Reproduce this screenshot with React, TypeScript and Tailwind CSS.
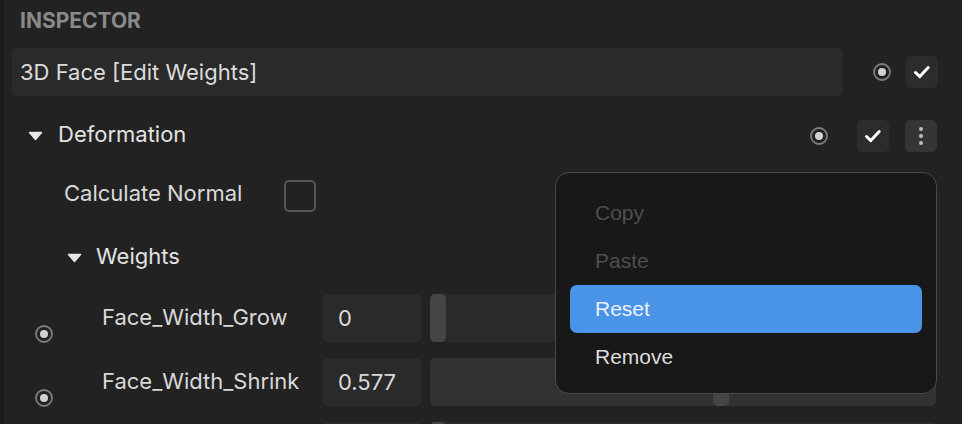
import React from 'react';

const font = { fontFamily: 'Inter, "Noto Sans", sans-serif' };

function Radio() {
  return (
    <svg width="18" height="18" viewBox="0 0 18 18" className="shrink-0 block">
      <circle cx="9" cy="9" r="8" fill="none" stroke="#7d7d7d" strokeWidth="1.8" />
      <circle cx="9" cy="9" r="4" fill="#d2d2d2" />
    </svg>
  );
}

function CheckButton() {
  return (
    <div className="w-[32px] h-[32px] rounded-[5px] bg-[#2c2c2c] flex items-center justify-center shrink-0">
      <svg width="18" height="18" viewBox="0 0 18 18">
        <path d="M2.5 9.5 L6.8 13.6 L15.2 4.6" fill="none" stroke="#ffffff" strokeWidth="3" strokeLinecap="round" strokeLinejoin="round" />
      </svg>
    </div>
  );
}

function MoreButton() {
  return (
    <div className="w-[32px] h-[32px] rounded-[5px] bg-[#353535] flex flex-col items-center justify-center gap-[3px] shrink-0">
      <span className="w-[4px] h-[4px] rounded-full bg-[#bdbdbd]" />
      <span className="w-[4px] h-[4px] rounded-full bg-[#bdbdbd]" />
      <span className="w-[4px] h-[4px] rounded-full bg-[#bdbdbd]" />
    </div>
  );
}

function Caret() {
  return (
    <svg width="15" height="10" viewBox="0 0 15 10" className="shrink-0 block">
      <path d="M1.5 1.5 L13.5 1.5 L7.5 8.5 Z" fill="#e6e6e6" stroke="#e6e6e6" strokeWidth="1.5" strokeLinejoin="round" />
    </svg>
  );
}

type Weight = { name: string; value: string; ratio: number; hovered?: boolean };

// the third row only peeks in at the bottom edge, its text is below the fold
const weights: Weight[] = [
  { name: 'Face_Width_Grow', value: '0', ratio: 0 },
  { name: 'Face_Width_Shrink', value: '0.577', ratio: 0.577, hovered: true },
  { name: '', value: '', ratio: 0 },
];

function WeightRow({ w }: { w: Weight }) {
  return (
    <div className="flex h-[48px] shrink-0">
      <div className="w-[49px] pl-[31px] pt-[31px] shrink-0 box-border">
        {w.name && <Radio />}
      </div>
      <div className="w-[269px] pl-[49px] flex items-center text-[22px] text-[#d9d9d9] shrink-0 box-border whitespace-nowrap -mt-[2px]">
        {w.name}
      </div>
      <div className="w-[100px] h-[48px] rounded-[5px] bg-[#2a2a2a] flex items-center px-[16px] text-[22px] text-[#d9d9d9] shrink-0">
        {w.value}
      </div>
      <div className={`ml-[8px] w-[506px] h-[48px] rounded-[5px] relative shrink-0 ${w.hovered ? 'bg-[#323232]' : 'bg-[#2a2a2a]'}`}>
        <div
          className="absolute top-0 h-[48px] w-[16px] rounded-[5px] bg-[#454545]"
          style={{ left: `${w.ratio * (506 - 16)}px` }}
        />
      </div>
    </div>
  );
}

export default function App() {
  return (
    <div className="w-[962px] h-[424px] bg-[#222222] overflow-hidden flex relative" style={font}>
      <div className="w-[4px] bg-[#1c1c1c] shrink-0" />
      <div className="flex-1 flex flex-col">
        {/* Header */}
        <div className="h-[48px] pl-[16px] pt-[8px] text-[21px] leading-[26px] font-bold text-[#8a8a8a] shrink-0">
          INSPECTOR
        </div>

        {/* Title row */}
        <div className="h-[48px] flex items-center shrink-0">
          <div className="ml-[8px] w-[831px] h-[48px] rounded-[5px] bg-[#2a2a2a] flex items-center px-[8px] text-[22px] text-[#dcdcdc]">
            3D Face [Edit Weights]
          </div>
          <div className="ml-[30px]"><Radio /></div>
          <div className="ml-[15px]"><CheckButton /></div>
        </div>

        {/* Deformation */}
        <div className="mt-[16px] h-[48px] flex items-center shrink-0">
          <div className="ml-[24px]"><Caret /></div>
          <div className="ml-[15px] text-[22px] text-[#e2e2e2] -mt-[4px]">Deformation</div>
          <div className="ml-auto flex items-center">
            <Radio />
            <div className="ml-[29px]"><CheckButton /></div>
            <div className="ml-[16px] mr-[25px]"><MoreButton /></div>
          </div>
        </div>

        {/* Calculate Normal */}
        <div className="mt-[12px] h-[48px] flex items-center shrink-0">
          <div className="ml-[60px] w-[220px] text-[22px] text-[#d9d9d9] -mt-[5px]">Calculate Normal</div>
          <div className="w-[32px] h-[32px] rounded-[5px] border-2 border-[#575757]" />
        </div>

        {/* Weights */}
        <div className="mt-[13px] h-[48px] flex items-center shrink-0">
          <div className="ml-[63px] mt-[2px]"><Caret /></div>
          <div className="ml-[14px] text-[22px] text-[#e2e2e2] -mt-[2px]">Weights</div>
        </div>

        {/* Weight rows */}
        <div className="mt-[13px] flex flex-col gap-[16px]">
          {weights.map((w, i) => (
            <WeightRow key={i} w={w} />
          ))}
        </div>
      </div>

      {/* Context menu */}
      <div
        className="absolute left-[555px] top-[172px] w-[382px] h-[222px] rounded-[14px] bg-[#181818] border-[1.5px] border-[#4a4a4a] px-[14px] pt-[16px] flex flex-col text-[21px]"
        style={{ fontFamily: '"Liberation Sans", Arial, sans-serif' }}
      >
        <div className="h-[48px] flex items-center pl-[25px] text-[#4e4e4e]">Copy</div>
        <div className="h-[48px] flex items-center pl-[25px] text-[#4e4e4e]">Paste</div>
        <div className="h-[48px] flex items-center pl-[25px] rounded-[7px] bg-[#4a94e8] text-[#eaf2fd]">Reset</div>
        <div className="h-[48px] flex items-center pl-[25px] text-[#dcdcdc]">Remove</div>
      </div>
    </div>
  );
}
